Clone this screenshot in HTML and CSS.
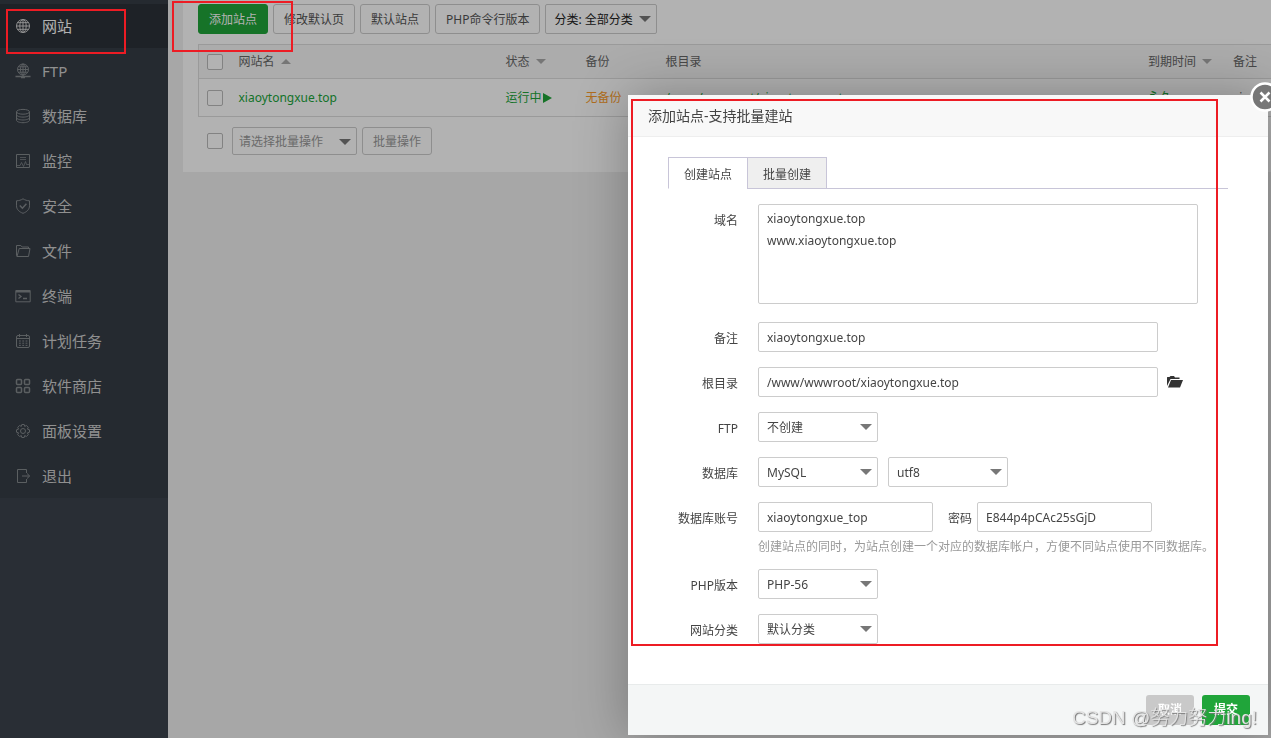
FILE: index.html
```html
<!DOCTYPE html>
<html lang="zh-CN">
<head>
<meta charset="utf-8">
<title>网站</title>
<link rel="stylesheet" href="styles.css">
</head>
<body>
<div class="app">
  <nav class="sidebar">
    <div class="menu">
      <a class="item active" href="#"><svg viewBox="0 0 16 16"><circle cx="8" cy="8" r="6.5"/><ellipse cx="8" cy="8" rx="3.2" ry="6.5"/><path d="M8 1.5v13M1.5 8h13M2.5 4.7h11M2.5 11.3h11"/></svg>网站</a>
      <a class="item" href="#"><svg viewBox="0 0 16 16"><circle cx="8" cy="6.5" r="5.5"/><ellipse cx="8" cy="6.5" rx="2.6" ry="5.5"/><path d="M8 1v13M2.5 6.5h11M3.5 3.8h9M3.5 9.2h9"/><path d="M.5 13.5h15M6 14.5h4" stroke-width="1.5"/></svg>FTP</a>
      <a class="item" href="#"><svg viewBox="0 0 16 16"><ellipse cx="8" cy="3.8" rx="6.5" ry="2.4"/><path d="M1.5 3.8v8.4c0 1.4 3 2.5 6.5 2.5s6.5-1.1 6.5-2.5V3.8M1.5 6.6C1.5 8 4.5 9.100 8 9.100s6.500-1.100 6.500-2.500M1.500 9.500c0 1.400 3 2.500 6.500 2.500s6.500-1.100 6.500-2.500"/></svg>数据库</a>
      <a class="item" href="#"><svg viewBox="0 0 16 16"><path d="M1.500 1.500h13v13h-13z"/><path d="M5 4.500h6M5 6.500h6M2 12.500h3l1.500-3 2 4 2-5 1 3h2.500" opacity=".75"/></svg>监控</a>
      <a class="item" href="#"><svg viewBox="0 0 16 16"><path d="M8 .8c2 1.300 4 1.900 6.500 2v5c0 3.500-2.500 6-6.500 7.500C4 13.800 1.500 11.300 1.500 7.800v-5C4 2.700 6 2.100 8 .8z"/><path d="M4.800 7.500l2.600 2.700 4-4.500" stroke-width="1.500"/></svg>安全</a>
      <a class="item" href="#"><svg viewBox="0 0 16 16"><path d="M2 13.500l-.5-1V2.500h4.300l1.400 1.500h6.300v1.500M2 13.500L4.200 5.500H15l-1.500 8z"/></svg>文件</a>
      <a class="item" href="#"><svg viewBox="0 0 16 16"><path d="M.8 2.500h14.400v11.300H.8z"/><path d="M1 3.500h14" stroke-width="2"/><path d="M3.500 6.500l2.500 2-2.500 2M8 10.500h4" stroke-width="1.300"/></svg>终端</a>
      <a class="item" href="#"><svg viewBox="0 0 16 16"><rect x="1.500" y="2.500" width="13" height="12" rx="1.500"/><path d="M4.500 1v3M11.500 1v3M1.500 5.500h13"/><path d="M4 8h8.500M4 10.200h8.500M4 12.400h8.500" stroke-dasharray="1.800 1.500"/></svg>计划任务</a>
      <a class="item" href="#"><svg viewBox="0 0 16 16" class="bold"><rect x="1.500" y="1.500" width="5" height="5" rx="1"/><rect x="9.500" y="1.500" width="5" height="5" rx="1"/><rect x="1.500" y="9.500" width="5" height="5" rx="1"/><rect x="9.500" y="9.500" width="5" height="5" rx="1"/></svg>软件商店</a>
      <a class="item" href="#"><svg viewBox="0 0 16 16"><circle cx="8" cy="8" r="2.500"/><path d="M6.800 1.500h2.400l.5 1.900 1.700-.9 1.900 1.900-.9 1.700 2.100.7v2.400l-2.100.7.9 1.700-1.900 1.900-1.700-.9-.5 1.900H6.800l-.5-1.900-1.700.9-1.900-1.900.9-1.700-2.100-.7V6.800l2.100-.7-.9-1.700 1.900-1.900 1.700.9z"/></svg>面板设置</a>
      <a class="item" href="#"><svg viewBox="0 0 16 16"><path d="M11.500 5V1.500h-9v13h9V11M7 8h7.500M12 5.500L14.700 8 12 10.500"/></svg>退出</a>
    </div>
  </nav>
  <main class="content">
    <section class="panel">
      <div class="toolbar">
        <button class="btn primary">添加站点</button>
        <button class="btn">修改默认页</button>
        <button class="btn">默认站点</button>
        <button class="btn">PHP命令行版本</button>
        <span class="pick filter"><select aria-label="分类"><option>分类: 全部分类</option></select></span>
      </div>
      <table class="sites">
        <colgroup><col class="c-check"><col class="c-name"><col class="c-mid"><col class="c-mid"><col><col class="c-time"><col class="c-note"></colgroup>
        <thead>
          <tr><th><input type="checkbox" aria-label="全选"></th><th>网站名<i class="sort up"></i></th><th>状态<i class="sort"></i></th><th>备份</th><th>根目录</th><th>到期时间<i class="sort"></i></th><th>备注</th></tr>
        </thead>
        <tbody>
          <tr><td><input type="checkbox" aria-label="选择 xiaoytongxue.top"></td><td><a href="#">xiaoytongxue.top</a></td><td><a href="#" class="run">运行中<i class="play"></i></a></td><td><a href="#" class="warn">无备份</a></td><td><a href="#">/www/wwwroot/xiaoytongxue.top</a></td><td><a href="#">永久</a></td><td>xiaoytongxue.top</td></tr>
        </tbody>
      </table>
      <div class="batch">
        <input type="checkbox" aria-label="批量选择">
        <span class="pick bulk"><select aria-label="批量操作"><option>请选择批量操作</option></select></span>
        <button class="btn faded">批量操作</button>
      </div>
    </section>
  </main>
</div>
<div class="shade"></div>

<div class="modal" role="dialog" aria-labelledby="dialog-title">
  <button class="close" aria-label="关闭"><svg viewBox="0 0 30 30"><circle cx="15" cy="15" r="13.500"/><path d="M10.500 10.500l9 9M19.500 10.500l-9 9"/></svg></button>
  <h1 class="modal-head" id="dialog-title">添加站点-支持批量建站</h1>
  <form class="modal-body">
    <div class="tabs"><button type="button" class="tab on">创建站点</button><button type="button" class="tab">批量创建</button></div>
    <div class="row tall"><label for="domain">域名</label><textarea id="domain">xiaoytongxue.top
www.xiaoytongxue.top</textarea></div>
    <div class="row"><label for="note">备注</label><input class="field wide" id="note" value="xiaoytongxue.top"></div>
    <div class="row"><label for="root">根目录</label><input class="field wide" id="root" value="/www/wwwroot/xiaoytongxue.top"><button type="button" class="browse" aria-label="选择目录"><svg viewBox="0 0 16 12"><path d="M0 10V1.500Q0 1 .5 1h2L3.500 0H7l1 1.500h4.500V3H3.500z"/><path d="M4 4h12l-3 7.500H1z"/></svg></button></div>
    <div class="row"><label for="ftp">FTP</label><span class="pick"><select id="ftp"><option>不创建</option></select></span></div>
    <div class="row"><label for="db">数据库</label><span class="pick"><select id="db"><option>MySQL</option></select></span><span class="pick"><select aria-label="编码"><option>utf8</option></select></span></div>
    <div class="row account"><label for="user">数据库账号</label><input class="field" id="user" value="xiaoytongxue_top"><label class="inline" for="pass">密码</label><input class="field" id="pass" value="E844p4pCAc25sGjD"></div>
    <p class="hint">创建站点的同时，为站点创建一个对应的数据库帐户，方便不同站点使用不同数据库。</p>
    <div class="row"><label for="php">PHP版本</label><span class="pick"><select id="php"><option>PHP-56</option></select></span></div>
    <div class="row"><label for="type">网站分类</label><span class="pick"><select id="type"><option>默认分类</option></select></span></div>
  </form>
  <div class="modal-foot"><button class="act cancel">取消</button><button class="act submit">提交</button></div>
</div>

<div class="mark mark-nav"></div>
<div class="mark mark-add"></div>
<div class="mark mark-form"></div>
<div class="watermark">CSDN @努力努力ing!</div>
</body>
</html>
```
FILE: styles.css
```css
* { box-sizing: border-box; }
body {
  margin: 0;
  overflow: hidden;
  background: #f0f0f0;
  color: #555;
  font: 12px/18px "Noto Sans", "Noto Sans CJK SC", sans-serif;
}
button, input, select, textarea { font: inherit; color: inherit; margin: 0; }
a { color: #20a53a; text-decoration: none; }

.app { display: flex; min-height: 100vh; }
.sidebar { flex: none; width: 168px; background: #3c424d; }
.menu { background: #363d46; padding-top: 4px; }
.item {
  display: flex;
  align-items: center;
  gap: 11px;
  height: 44px;
  margin-bottom: 1px;
  padding-left: 15px;
  color: #cfcfcf;
  font-size: 15px;
}
.item svg { width: 16px; height: 16px; fill: none; stroke: #83888c; stroke-width: 1; }
.item svg.bold { stroke-width: 1.5; }
.item.active { background: #2c3138; color: #fff; }
.item.active svg { stroke: #d0d0d0; }

.content { flex: 1; min-width: 0; padding-left: 15px; }
.panel { background: #fff; padding: 4px 0 17px 15px; }
.toolbar { display: flex; gap: 5px; margin-bottom: 10px; }
.btn {
  height: 30px;
  padding: 2px 9px 0;
  border: 1px solid #ccc;
  border-radius: 3px;
  background: #fff;
  white-space: nowrap;
}
.toolbar .btn, .batch .btn { padding-left: 10px; padding-right: 10px; }
.btn.primary { background: #20a53a; border-color: #20a53a; color: #fff; }
.btn.faded { height: 28px; color: #999; }

.pick { position: relative; display: inline-block; width: 120px; height: 30px; }
.pick select {
  appearance: none;
  width: 100%;
  height: 100%;
  padding: 2px 20px 0 8px;
  border: 1px solid #ccc;
  border-radius: 2px;
  background: #fff;
}
.pick::after {
  content: "";
  position: absolute;
  right: 6px;
  top: 12px;
  border: 6px solid transparent;
  border-top-color: #777;
  border-bottom: 0;
  pointer-events: none;
}
.pick.filter { width: 112px; color: #222; }
.pick.bulk { width: 125px; height: 28px; color: #999; }
.pick.bulk select { padding-left: 6px; }

.sites {
  width: 100%;
  table-layout: fixed;
  border-collapse: collapse;
  border: 1px solid #ddd;
  border-right: 0;
}
.c-check { width: 33px; }
.c-name { width: 267px; }
.c-mid { width: 80px; }
.c-time { width: 85px; }
.c-note { width: 45px; }
.sites th, .sites td {
  padding: 0 7px;
  text-align: left;
  font-weight: 400;
  white-space: nowrap;
  overflow: hidden;
}
.sites th:first-child, .sites td:first-child { padding-left: 8px; }
.sites th { height: 34px; background: #f6f6f6; color: #666; border-bottom: 1px solid #ddd; }
.sites td { height: 38px; }
.sites a.warn { color: #fc9d2b; }
.sort {
  display: inline-block;
  margin-left: 6px;
  vertical-align: 2px;
  border: 5px solid transparent;
  border-top-color: #aaa;
  border-bottom: 0;
}
.sort.up { border-bottom: 5px solid #aaa; border-top: 0; }
.play {
  display: inline-block;
  vertical-align: -1px;
  margin-left: 1px;
  border: 5px solid transparent;
  border-left: 9px solid #20a53a;
  border-right: 0;
}
input[type="checkbox"] {
  appearance: none;
  display: block;
  width: 16px;
  height: 16px;
  border: 1px solid #bbb;
  border-radius: 2px;
  background: #fff;
}
.batch { display: flex; align-items: center; gap: 5px; padding: 10px 0 0 9px; }
.batch input { margin-right: 4px; }

.shade { position: fixed; inset: 0; background: rgba(0, 0, 0, .3); }

.modal {
  position: fixed;
  right: 3px;
  bottom: 3px;
  width: 640px;
  background: #fff;
  box-shadow: 1px 1px 50px rgba(0, 0, 0, .3);
  color: #444;
}
.close {
  position: absolute;
  top: -13px;
  right: -12px;
  width: 30px;
  height: 30px;
  padding: 0;
  border: 0;
  background: none;
}
.close svg { display: block; fill: #777; stroke: #fff; stroke-width: 2.5; }
.modal-head {
  margin: 0;
  padding: 0 20px;
  height: 42px;
  background: #f8f8f8;
  border-bottom: 1px solid #eee;
  font-size: 14px;
  font-weight: 400;
  line-height: 42px;
}
.modal-body { padding: 20px 40px 25px; }
.tabs { display: flex; border-bottom: 1px solid #c8c5d8; margin-bottom: 15px; }
.tab {
  width: 80px;
  height: 32px;
  padding: 4px 0 0;
  margin: 0 0 -1px;
  border: 1px solid #c8c5d8;
  background: #efefef;
}
.tab + .tab { margin-left: -1px; }
.tab.on { background: #fff; border-bottom-color: #fff; }
.row { display: flex; align-items: center; margin-bottom: 15px; }
.row label { flex: none; width: 70px; margin-right: 20px; padding-top: 3px; text-align: right; }
.row .pick + .pick { margin-left: 10px; }
.row.tall { align-items: flex-start; margin-bottom: 18px; }
.row.tall label { padding-top: 8px; }
.row .inline { width: auto; margin: 0 5px 0 15px; }
.field, textarea { border: 1px solid #ccc; border-radius: 2px; background: #fff; padding: 0 8px; }
.field { width: 175px; height: 30px; padding-top: 1px; }
.field.wide { width: 400px; }
textarea { width: 440px; height: 100px; padding-top: 3px; line-height: 22px; resize: none; }
.browse { width: 16px; height: 12px; margin-left: 9px; padding: 0; border: 0; background: none; }
.browse svg { display: block; fill: #333; }
.row.account { margin-bottom: 4px; }
.hint { margin: 0 0 12px 90px; color: #999; line-height: 21px; white-space: nowrap; }
.modal-foot {
  display: flex;
  justify-content: flex-end;
  gap: 8px;
  padding: 10px 18px;
  background: #f4f6f6;
  border-top: 1px solid #e8ebeb;
}
.act { width: 48px; height: 30px; padding: 0; border: 0; border-radius: 3px; color: #fff; font-weight: 700; }
.cancel { background: #c9c9c9; }
.submit { background: #20a53a; }

.mark { position: fixed; border: 2px solid #ed1c24; pointer-events: none; }
.mark-nav { left: 6px; top: 9px; width: 120px; height: 45px; }
.mark-add { left: 172px; top: 1px; width: 121px; height: 51px; }
.mark-form { right: 53px; bottom: 92px; width: 587px; height: 547px; }
.watermark {
  position: fixed;
  right: 14px;
  bottom: 7px;
  color: #e4e4e4;
  font: 19px/26px "Liberation Sans", "Noto Sans CJK SC", sans-serif;
  font-weight: 300;
  text-shadow: 1px 1px 1px #777;
}
```
